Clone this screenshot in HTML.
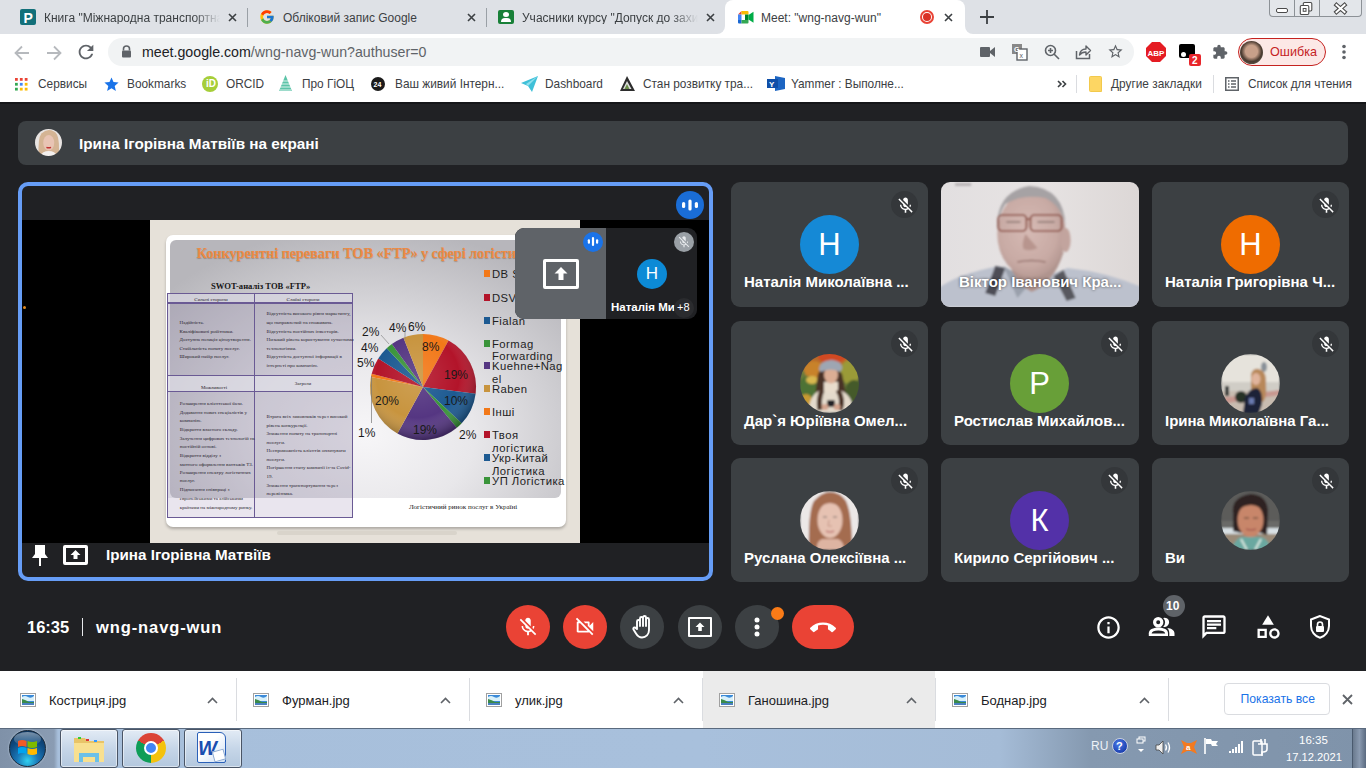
<!DOCTYPE html>
<html><head><meta charset="utf-8">
<style>
*{margin:0;padding:0;box-sizing:border-box}
html,body{width:1366px;height:768px;overflow:hidden;background:#202124;font-family:"Liberation Sans",sans-serif}
.a{position:absolute}
.t{position:absolute;white-space:nowrap;line-height:1}
svg{position:absolute;overflow:visible}
.tabt{font-size:12px;color:#3c4043;top:11.5px}
.fade{-webkit-mask-image:linear-gradient(to right,#000 85%,transparent)}
.sep{position:absolute;width:1px;background:#9aa0a6}
.bmt{font-size:11.85px;color:#3c4043;top:79px}
.nm{font-size:15px;font-weight:bold;color:#fff}
.tile{position:absolute;background:#3c4043;border-radius:9px;width:197px;height:125px}
.mute{position:absolute;width:27px;height:27px;border-radius:50%;background:#34373a}
.av{position:absolute;width:59px;height:59px;border-radius:50%;color:#fff;font-size:31px;text-align:center;line-height:59px}
.btn{position:absolute;width:44px;height:44px;border-radius:22px;top:605px;background:#3c4043}
.red{background:#ea4335}
.st{font:5px "Liberation Serif";color:#2a2530;line-height:6px}
.dl{font-size:13px;color:#202124;top:694px}
</style></head><body>
<!-- TAB STRIP -->
<div class="a" style="left:0;top:0;width:1366px;height:34px;background:#dee1e6"></div>
<div class="a" style="left:717px;top:26px;width:256px;height:8px;background:#fff"></div><div class="a" style="left:709px;top:18px;width:16px;height:16px;border-radius:50%;background:#dee1e6"></div><div class="a" style="left:965px;top:18px;width:16px;height:16px;border-radius:50%;background:#dee1e6"></div>
<!-- tab1 -->
<div class="a" style="left:20px;top:9px;width:16px;height:16px;background:#13707a;border-radius:2px"></div>
<div class="t" style="left:23.5px;top:9.5px;font:bold 14px 'Liberation Sans';color:#fff;line-height:16px">P</div>
<div class="t tabt fade" style="left:44px;width:176px;overflow:hidden">Книга "Міжнародна транспортна</div>
<svg style="left:228px;top:13px" width="9" height="9" viewBox="0 0 9 9"><path d="M1 1L8 8M8 1L1 8" stroke="#3c4043" stroke-width="1.6"/></svg>
<div class="sep" style="left:247px;top:8px;height:19px"></div>
<!-- tab2 -->
<svg style="left:259px;top:9px" width="16" height="16" viewBox="0 0 48 48"><path fill="#FFC107" d="M43.6 20H24v8h11.3C33.7 32.7 29.2 36 24 36c-6.6 0-12-5.4-12-12s5.4-12 12-12c3.1 0 5.8 1.2 7.9 3l5.7-5.7C34 6.1 29.3 4 24 4 12.9 4 4 12.9 4 24s8.9 20 20 20 20-8.9 20-20c0-1.3-.1-2.7-.4-4z"/><path fill="#FF3D00" d="M6.3 14.7l6.6 4.8C14.7 15.1 19 12 24 12c3.1 0 5.8 1.2 7.9 3l5.7-5.7C34 6.1 29.3 4 24 4 16.3 4 9.7 8.3 6.3 14.7z"/><path fill="#4CAF50" d="M24 44c5.2 0 9.9-2 13.4-5.2l-6.2-5.2C29.2 35.1 26.7 36 24 36c-5.2 0-9.6-3.3-11.3-8l-6.5 5C9.5 39.6 16.2 44 24 44z"/><path fill="#1976D2" d="M43.6 20H24v8h11.3c-.8 2.2-2.2 4.2-4.1 5.6l6.2 5.2C37 39.2 44 34 44 24c0-1.3-.1-2.7-.4-4z"/></svg>
<div class="t tabt" style="left:283px">Обліковий запис Google</div>
<svg style="left:467px;top:13px" width="9" height="9" viewBox="0 0 9 9"><path d="M1 1L8 8M8 1L1 8" stroke="#3c4043" stroke-width="1.6"/></svg>
<div class="sep" style="left:486px;top:8px;height:19px"></div>
<!-- tab3 -->
<div class="a" style="left:498px;top:10px;width:16px;height:14px;background:#188038;border-radius:2px"></div>
<div class="a" style="left:503px;top:12px;width:6px;height:5px;background:#fff;border-radius:50%"></div>
<div class="a" style="left:501px;top:18px;width:10px;height:4px;background:#fff;border-radius:4px 4px 0 0"></div>
<div class="t tabt fade" style="left:522px;width:176px;overflow:hidden">Учасники курсу "Допуск до захисту</div>
<svg style="left:706px;top:13px" width="9" height="9" viewBox="0 0 9 9"><path d="M1 1L8 8M8 1L1 8" stroke="#3c4043" stroke-width="1.6"/></svg>
<!-- active tab -->
<div class="a" style="left:725px;top:0;width:240px;height:34px;background:#fff;border-radius:8px 8px 0 0"></div>
<svg style="left:737.5px;top:10.5px" width="15.5" height="12.5" viewBox="0 0 15.5 12.5"><path d="M0 3.5L3.5 0V3.5Z" fill="#ea4335"/><path d="M3.5 0H9.5Q10.5 0 10.5 1V3.5H3.5Z" fill="#fbbc04"/><path d="M0 3.5H3.5V9H0Z" fill="#4285f4"/><path d="M0 9H3.5V12.5H1Q0 12.5 0 11.5Z" fill="#1967d2"/><path d="M3.5 9H10.5V11.5Q10.5 12.5 9.5 12.5H3.5Z" fill="#34a853"/><path d="M7 3.5H10.5V9H7Z" fill="#00832d"/><path d="M10.5 4L15.5 0.8V11.7L10.5 8.5Z" fill="#00ac47"/></svg>
<div class="t tabt" style="left:761px">Meet: "wng-navg-wun"</div>
<div class="a" style="left:920px;top:10px;width:14px;height:14px;border-radius:50%;border:2px solid #ea4335"></div>
<div class="a" style="left:923px;top:13px;width:8px;height:8px;border-radius:50%;background:#d93025"></div>
<svg style="left:944px;top:13px" width="9" height="9" viewBox="0 0 9 9"><path d="M1 1L8 8M8 1L1 8" stroke="#3c4043" stroke-width="1.6"/></svg>
<!-- new tab + -->
<svg style="left:980px;top:10px" width="14" height="14" viewBox="0 0 14 14"><path d="M7 0V14M0 7H14" stroke="#3c4043" stroke-width="1.8"/></svg>
<!-- window controls -->
<div class="a" style="left:1269px;top:-1px;width:93px;height:18px;border:1px solid #8c9196;border-top:none;border-radius:0 0 4px 4px;background:#e3e6ea"></div>
<div class="sep" style="left:1294px;top:0;height:17px;background:#8c9196"></div>
<div class="sep" style="left:1319px;top:0;height:17px;background:#8c9196"></div>
<div class="a" style="left:1276px;top:7.8px;width:12px;height:5px;border:1px solid #4a4a4a;border-radius:2px;background:#fff"></div>
<svg style="left:1299px;top:1px" width="15" height="15" viewBox="0 0 15 15"><rect x="4.3" y="1.5" width="8.5" height="8.5" rx="1.2" fill="#fff" stroke="#4a4a4a" stroke-width="1.1"/><rect x="1.3" y="4.5" width="8.5" height="9" rx="1.2" fill="#fff" stroke="#4a4a4a" stroke-width="1.1"/><rect x="4.2" y="7.5" width="2.8" height="2.8" fill="none" stroke="#4a4a4a" stroke-width="1"/></svg>
<svg style="left:1334px;top:2.5px" width="13" height="11" viewBox="0 0 13 11"><path d="M2.5 2L10.5 9M10.5 2L2.5 9" stroke="#4a4a4a" stroke-width="4.2" stroke-linecap="square"/><path d="M2.5 2L10.5 9M10.5 2L2.5 9" stroke="#fff" stroke-width="2" stroke-linecap="square"/></svg>

<!-- TOOLBAR -->
<div class="a" style="left:0;top:34px;width:1366px;height:34px;background:#fff"></div>
<svg style="left:14px;top:45px" width="16" height="16" viewBox="0 0 16 16"><path d="M15 8H2M8 1.5L1.5 8L8 14.5" fill="none" stroke="#b6b9bd" stroke-width="1.8"/></svg>
<svg style="left:46px;top:45px" width="16" height="16" viewBox="0 0 16 16"><path d="M1 8H14M8 1.5L14.5 8L8 14.5" fill="none" stroke="#b6b9bd" stroke-width="1.8"/></svg>
<svg style="left:75px;top:41px" width="22" height="22" viewBox="0 0 24 24"><path fill="#5f6368" d="M17.65 6.35C16.2 4.9 14.21 4 12 4c-4.42 0-7.99 3.58-7.99 8s3.57 8 7.99 8c3.73 0 6.84-2.55 7.73-6h-2.08c-.82 2.33-3.04 4-5.65 4-3.31 0-6-2.69-6-6s2.69-6 6-6c1.66 0 3.14.69 4.22 1.78L13 11h7V4l-2.35 2.35z"/></svg>
<div class="a" style="left:108px;top:38px;width:1026px;height:28px;background:#f1f3f4;border-radius:14px"></div>
<svg style="left:121px;top:45px" width="11" height="13" viewBox="0 0 11 13"><path d="M2.5 5.5V3.8C2.5 2 3.8 1 5.5 1S8.5 2 8.5 3.8V5.5" fill="none" stroke="#5f6368" stroke-width="1.6"/><rect x="1" y="5.5" width="9" height="7" rx="1" fill="#5f6368"/></svg>
<div class="t" style="left:142px;top:45px;font-size:14.2px;color:#202124">meet.google.com<span style="color:#5f6368">/wng-navg-wun?authuser=0</span></div>
<!-- omnibox icons -->
<svg style="left:980px;top:45px" width="16" height="14" viewBox="0 0 16 14"><rect x="0" y="2" width="10" height="10" rx="1" fill="#5f6368"/><path d="M10 6L15 2V12L10 8Z" fill="#5f6368"/></svg>
<svg style="left:1011px;top:43px" width="17" height="18" viewBox="0 0 17 18"><rect x="1" y="1" width="10" height="10" fill="#888"/><rect x="6" y="6" width="10" height="11" fill="#fff" stroke="#5f6368" stroke-width="1.4"/><text x="3" y="9" font-size="7" font-weight="bold" fill="#fff" font-family="Liberation Sans">G</text><text x="8.5" y="15" font-size="7" fill="#5f6368" font-family="Liberation Sans">x</text></svg>
<svg style="left:1044px;top:44px" width="16" height="16" viewBox="0 0 16 16"><circle cx="6.5" cy="6.5" r="5" fill="none" stroke="#5f6368" stroke-width="1.6"/><path d="M10 10L15 15M4 6.5H9M6.5 4V9" stroke="#5f6368" stroke-width="1.6"/></svg>
<svg style="left:1075px;top:44px" width="16" height="16" viewBox="0 0 16 16"><path d="M1.5 7V14.5H14.5V10" fill="none" stroke="#5f6368" stroke-width="1.5"/><path d="M4.5 11C5 7 8 5 11 5V2L15.5 6.5L11 11V8C8 8 6 9 4.5 11Z" fill="none" stroke="#5f6368" stroke-width="1.4" stroke-linejoin="round"/></svg>
<svg style="left:1107px;top:43px" width="17" height="17" viewBox="0 0 24 24"><path fill="#5f6368" d="M22 9.24l-7.19-.62L12 2 9.19 8.63 2 9.24l5.46 4.73L5.82 21 12 17.27 18.18 21l-1.63-7.03L22 9.24zM12 15.4l-3.76 2.27 1-4.28-3.32-2.88 4.38-.38L12 6.1l1.71 4.04 4.38.38-3.32 2.88 1 4.28L12 15.4z"/></svg>
<!-- extensions -->
<svg style="left:1146px;top:42px" width="20" height="20" viewBox="0 0 20 20"><path d="M6 0H14L20 6V14L14 20H6L0 14V6Z" fill="#e51c23"/><text x="10" y="13.5" font-size="8" font-weight="bold" fill="#fff" text-anchor="middle" font-family="Liberation Sans">ABP</text></svg>
<div class="a" style="left:1179px;top:44px;width:16px;height:14px;background:#000;border-radius:2px"></div>
<div class="a" style="left:1181px;top:52px;width:5px;height:5px;background:#fff;border-radius:50%"></div>
<div class="a" style="left:1189px;top:54px;width:12px;height:12px;background:#e8262b;border-radius:2px"></div>
<div class="t" style="left:1192px;top:55.5px;font-size:10px;font-weight:bold;color:#fff">2</div>
<svg style="left:1212px;top:44px" width="16" height="16" viewBox="0 0 24 24"><path fill="#5f6368" d="M20.5 11H19V7c0-1.1-.9-2-2-2h-4V3.5C13 2.12 11.88 1 10.5 1S8 2.12 8 3.5V5H4c-1.1 0-1.99.9-1.99 2v3.8H3.5c1.49 0 2.7 1.21 2.7 2.7s-1.21 2.7-2.7 2.7H2V20c0 1.1.9 2 2 2h3.8v-1.5c0-1.49 1.21-2.7 2.7-2.7 1.49 0 2.7 1.21 2.7 2.7V22H17c1.1 0 2-.9 2-2v-4h1.5c1.38 0 2.5-1.12 2.5-2.5S21.88 11 20.5 11z"/></svg>
<div class="a" style="left:1238px;top:38px;width:88px;height:28px;border:1px solid #c5221f;border-radius:14px;background:#fce8e6"></div>
<div class="a" style="left:1240px;top:41px;width:23px;height:23px;border-radius:50%;background:radial-gradient(circle at 50% 45%,#c8a08a 0 35%,#4a3a30 60%,#6b6f60 100%)"></div>
<div class="t" style="left:1270px;top:46px;font-size:12.6px;color:#c5221f">Ошибка</div>
<svg style="left:1341px;top:44px" width="6" height="16" viewBox="0 0 6 16"><circle cx="3" cy="2.5" r="1.8" fill="#5f6368"/><circle cx="3" cy="8" r="1.8" fill="#5f6368"/><circle cx="3" cy="13.5" r="1.8" fill="#5f6368"/></svg>

<!-- BOOKMARKS -->
<div class="a" style="left:0;top:68px;width:1366px;height:34px;background:#fff"></div>
<svg style="left:15px;top:77.5px" width="13" height="13" viewBox="0 0 14 14">
<rect x="0" y="0" width="3" height="3" fill="#ea4335"/><rect x="5.25" y="0" width="3" height="3" fill="#ea4335"/><rect x="10.5" y="0" width="3" height="3" fill="#ea4335"/>
<rect x="0" y="5.25" width="3" height="3" fill="#34a853"/><rect x="5.25" y="5.25" width="3" height="3" fill="#4285f4"/><rect x="10.5" y="5.25" width="3" height="3" fill="#fbbc04"/>
<rect x="0" y="10.5" width="3" height="3" fill="#34a853"/><rect x="5.25" y="10.5" width="3" height="3" fill="#fbbc04"/><rect x="10.5" y="10.5" width="3" height="3" fill="#fbbc04"/></svg>
<div class="t bmt" style="left:38px">Сервисы</div>
<svg style="left:102.5px;top:75.5px" width="17" height="17" viewBox="0 0 24 24"><path fill="#1a73e8" d="M12 17.27L18.18 21l-1.64-7.03L22 9.24l-7.19-.61L12 2 9.19 8.63 2 9.24l5.46 4.73L5.82 21z"/></svg>
<div class="t bmt" style="left:127px">Bookmarks</div>
<div class="a" style="left:202px;top:76px;width:16px;height:16px;border-radius:50%;background:#a6ce39"></div>
<div class="t" style="left:206px;top:79px;font-size:10px;font-weight:bold;color:#fff">iD</div>
<div class="t bmt" style="left:226px">ORCID</div>
<svg style="left:279px;top:75px" width="13" height="17" viewBox="0 0 13 17"><path d="M6.5 0L13 16H0Z" fill="#5cc4a8"/><path d="M2 9H11M1 12H12M3 6H10M0.5 15H12.5" stroke="#fff" stroke-width="0.8"/></svg>
<div class="t bmt" style="left:302px">Про ГіОЦ</div>
<div class="a" style="left:371px;top:77px;width:14px;height:14px;border-radius:50%;background:#1b1b1b"></div>
<div class="t" style="left:373.5px;top:81px;font-size:7px;font-weight:bold;color:#fff">24</div>
<div class="t bmt" style="left:395px">Ваш живий Інтерн...</div>
<svg style="left:521px;top:76px" width="17" height="16" viewBox="0 0 17 16"><path d="M0 7L17 0L11 16L7 10Z" fill="#3fc0d8"/><path d="M7 10L17 0L5 8Z" fill="#8fe0ee"/></svg>
<div class="t bmt" style="left:545px">Dashboard</div>
<svg style="left:619px;top:75px" width="17" height="17" viewBox="0 0 17 17"><path d="M8 1L16 16H1Z" fill="#2d2d2d"/><path d="M8 6L12.5 14H4Z" fill="#ddd"/><path d="M8 9L10.5 14H5.5Z" fill="#6b8f4a"/></svg>
<div class="t bmt" style="left:643px">Стан розвитку тра...</div>
<svg style="left:767px;top:75px" width="18" height="17" viewBox="0 0 18 17"><path d="M8 1L18 3V14L8 16Z" fill="#1c65c2"/><path d="M0 4H11V13H0Z" fill="#0f4fa8"/><text x="2" y="11.5" font-size="8" font-weight="bold" fill="#fff" font-family="Liberation Sans">Y</text></svg>
<div class="t bmt" style="left:791px">Yammer : Выполне...</div>
<svg style="left:1057px;top:80px" width="10" height="8" viewBox="0 0 10 8"><path d="M1 1L4 4L1 7M5.5 1L8.5 4L5.5 7" fill="none" stroke="#3c4043" stroke-width="1.6"/></svg>
<div class="sep" style="left:1076px;top:75px;height:18px;background:#dadce0"></div>
<svg style="left:1089px;top:76px" width="13" height="16" viewBox="0 0 13 16"><path d="M0.5 1.5Q0.5 0.5 1.5 0.5H11.5Q12.5 0.5 12.5 1.5V15.5H1.5Q0.5 15.5 0.5 14.5Z" fill="#fdd663" stroke="#f2c94c" stroke-width="1"/></svg>
<div class="t bmt" style="left:1111px">Другие закладки</div>
<div class="sep" style="left:1213px;top:75px;height:18px;background:#dadce0"></div>
<svg style="left:1225px;top:77px" width="14" height="14" viewBox="0 0 14 14"><rect x="0.75" y="0.75" width="12.5" height="12.5" fill="none" stroke="#5f6368" stroke-width="1.5"/><path d="M3 4H4.5M6 4H11M3 7H4.5M6 7H11M3 10H4.5M6 10H11" stroke="#5f6368" stroke-width="1.3"/></svg>
<div class="t bmt" style="left:1248px">Список для чтения</div>
<!-- MEET -->
<div class="a" style="left:0;top:102px;width:1366px;height:569px;background:#202124"></div>
<div class="a" style="left:0;top:102px;width:1366px;height:2px;background:#151619"></div>
<!-- header -->
<div class="a" style="left:18px;top:121px;width:1330px;height:44px;background:#3c4043;border-radius:8px"></div>
<svg style="left:35px;top:129px" width="27" height="27" viewBox="0 0 59 59"><defs><clipPath id="ch"><circle cx="29.5" cy="29.5" r="29.5"/></clipPath><filter id="fh"><feGaussianBlur stdDeviation="1.5"/></filter></defs><g clip-path="url(#ch)"><g filter="url(#fh)"><rect width="59" height="59" fill="#e8e4e2"/><path d="M8 59Q6 20 14 10Q22 2 30 2Q42 2 48 12Q54 24 52 59Z" fill="#d4b494"/><ellipse cx="30" cy="30" rx="12" ry="17" fill="#e8c4b4"/><path d="M25 40Q30 42 35 40" stroke="#c03030" stroke-width="3"/><path d="M12 59Q16 48 30 48Q44 48 48 59Z" fill="#f4f0ee"/></g></g></svg>
<div class="t nm" style="left:79px;top:135.5px;font-size:15.3px">Ірина Ігорівна Матвіїв на екрані</div>
<!-- main tile -->
<div class="a" style="left:18px;top:182px;width:695px;height:399px;border:4px solid #669df6;border-radius:10px;background:#202124"></div>
<div class="a" style="left:22px;top:220px;width:687px;height:323px;background:#000"></div><div class="a" style="left:23px;top:306px;width:3px;height:3px;border-radius:50%;background:#e08a20"></div>
<div class="a" style="left:676px;top:191px;width:28px;height:28px;border-radius:50%;background:#1a6dd6"></div>
<svg style="left:681px;top:197px" width="18" height="16" viewBox="0 0 18 16"><rect x="1" y="5" width="3.2" height="6" rx="1.6" fill="#fff"/><rect x="7.4" y="2.5" width="3.2" height="11" rx="1.6" fill="#fff"/><rect x="13.8" y="5" width="3.2" height="6" rx="1.6" fill="#fff"/></svg>
<div class="a" style="left:150px;top:220px;width:430px;height:323px;background:#e6e1d9"></div>
<div class="a" style="left:166px;top:235px;width:400px;height:292px;background:#fff;border-radius:7px;box-shadow:0 2px 3px rgba(0,0,0,.25)"></div>
<div class="a" style="left:277px;top:531px;width:180px;height:4px;border-radius:2px;background:#d9d4cb"></div>
<div class="a" style="left:170px;top:240px;width:390.5px;height:258px;border-radius:6px;background:radial-gradient(ellipse 70% 80% at 50% 75%,#f7f6f8 0,#e8e7ea 40%,#b7b6bb 100%)"></div>
<div class="t" style="left:196.5px;top:245.3px;font:bold 14.6px 'Liberation Serif';color:#ec8a44;letter-spacing:-.2px;text-shadow:0 1px 1px rgba(120,60,20,.35)">Конкурентні переваги ТОВ «FTP» у сфері логістики</div>
<div class="t" style="left:211px;top:280.7px;font:bold 8.6px 'Liberation Serif';color:#161616">SWOT-аналіз ТОВ «FTP»</div>
<div class="a" style="left:167px;top:293px;width:186px;height:225px;border:1px solid #6a5a94;background:rgba(150,140,170,.35)"></div>
<div class="a" style="left:168px;top:294px;width:184px;height:9px;background:rgba(230,230,236,.6)"></div>
<div class="a" style="left:168px;top:375px;width:184px;height:16px;background:rgba(230,230,236,.6)"></div>
<div class="a" style="left:168px;top:498px;width:184px;height:19px;background:rgba(235,232,240,.85)"></div>
<div class="a" style="left:167px;top:302px;width:186px;height:1.5px;background:#6a5a94"></div>
<div class="a" style="left:167px;top:375px;width:186px;height:1px;background:#6a5a94"></div>
<div class="a" style="left:167px;top:391px;width:186px;height:1px;background:#6a5a94"></div>
<div class="a" style="left:254px;top:293px;width:1px;height:225px;background:#6a5a94"></div>
<div class="t st" style="left:171px;width:80px;text-align:center;top:296.5px">Сильні сторони</div><div class="t st" style="left:263px;width:80px;text-align:center;top:296.5px">Слабкі сторони</div><div class="t st" style="left:174px;width:80px;text-align:center;top:385.0px">Можливості</div><div class="t st" style="left:263px;width:80px;text-align:center;top:381.4px">Загрози</div><div class="t st" style="left:179.6px;top:320.3px">Надійність.</div><div class="t st" style="left:179.6px;top:328.7px">Кваліфіковані робітники.</div><div class="t st" style="left:179.6px;top:337.4px">Доступна позиція ціноутворення.</div><div class="t st" style="left:179.6px;top:346.0px">Стабільність попиту послуг.</div><div class="t st" style="left:179.6px;top:354.0px">Широкий набір послуг.</div><div class="t st" style="left:266.6px;top:311.4px">Відсутність високого рівня маркетингу,</div><div class="t st" style="left:266.6px;top:319.8px">що направлений на споживача.</div><div class="t st" style="left:266.6px;top:328.5px">Відсутність постійних інвесторів.</div><div class="t st" style="left:266.6px;top:337.0px">Низький рівень користування сучасними</div><div class="t st" style="left:266.6px;top:345.5px">технологіями.</div><div class="t st" style="left:266.6px;top:354.0px">Відсутність доступної інформації в</div><div class="t st" style="left:266.6px;top:362.8px">інтернеті про компанію.</div><div class="t st" style="left:179.8px;top:400.9px">Розширення клієнтської бази.</div><div class="t st" style="left:179.8px;top:409.5px">Додавання нових спеціалістів у</div><div class="t st" style="left:179.8px;top:418.4px">компанію.</div><div class="t st" style="left:179.8px;top:427.0px">Відкриття власного складу.</div><div class="t st" style="left:179.8px;top:435.5px">Залучення цифрових технологій на</div><div class="t st" style="left:179.8px;top:444.0px">постійній основі.</div><div class="t st" style="left:179.8px;top:452.5px">Відкриття відділу з</div><div class="t st" style="left:179.8px;top:461.5px">митного оформлення вантажів ТЗ.</div><div class="t st" style="left:179.8px;top:469.6px">Розширення спектру логістичних</div><div class="t st" style="left:179.8px;top:478.0px">послуг.</div><div class="t st" style="left:179.8px;top:487.0px">Підписання співпраці з</div><div class="t st" style="left:179.8px;top:495.7px">європейськими та азійськими</div><div class="t st" style="left:179.8px;top:504.6px">країнами на міжнародному ринку.</div><div class="t st" style="left:266.6px;top:414.0px">Втрата всіх замовників через високий</div><div class="t st" style="left:266.6px;top:422.5px">рівень конкуренції.</div><div class="t st" style="left:266.6px;top:431.0px">Зниження попиту на транспортні</div><div class="t st" style="left:266.6px;top:439.6px">послуги.</div><div class="t st" style="left:266.6px;top:448.0px">Неспроможність клієнтів оплачувати</div><div class="t st" style="left:266.6px;top:456.7px">послуги.</div><div class="t st" style="left:266.6px;top:465.0px">Погіршення стану компанії із-за Covid-</div><div class="t st" style="left:266.6px;top:473.6px">19.</div><div class="t st" style="left:266.6px;top:482.5px">Зниження транспортування через</div><div class="t st" style="left:266.6px;top:491.0px">перевізника.</div>
<div class="t" style="left:409px;top:503px;font:7px 'Liberation Serif';color:#222">Логістичний ринок послуг в Україні</div>
<svg style="left:0;top:0" width="1366" height="768" viewBox="0 0 1366 768"><defs><radialGradient id="pg" cx="0.45" cy="0.4" r="0.6"><stop offset="0" stop-color="#fff" stop-opacity=".12"/><stop offset="0.65" stop-color="#fff" stop-opacity="0"/><stop offset="1" stop-color="#000" stop-opacity=".3"/></radialGradient></defs><path d="M423 387L423.00 334.00A53 53 0 0 1 448.53 340.56Z" fill="#f27818"/><path d="M423 387L448.53 340.56A53 53 0 0 1 475.58 393.64Z" fill="#b3142a"/><path d="M423 387L475.58 393.64A53 53 0 0 1 461.64 423.28Z" fill="#1d5a92"/><path d="M423 387L461.64 423.28A53 53 0 0 1 456.78 427.84Z" fill="#3a943a"/><path d="M423 387L456.78 427.84A53 53 0 0 1 397.47 433.44Z" fill="#553682"/><path d="M423 387L397.47 433.44A53 53 0 0 1 370.94 377.07Z" fill="#c8943e"/><path d="M423 387L370.94 377.07A53 53 0 0 1 371.67 373.82Z" fill="#f27818"/><path d="M423 387L371.67 373.82A53 53 0 0 1 378.25 358.60Z" fill="#b3142a"/><path d="M423 387L378.25 358.60A53 53 0 0 1 386.72 348.36Z" fill="#1d5a92"/><path d="M423 387L386.72 348.36A53 53 0 0 1 391.85 344.12Z" fill="#3a943a"/><path d="M423 387L391.85 344.12A53 53 0 0 1 403.49 337.72Z" fill="#553682"/><path d="M423 387L403.49 337.72A53 53 0 0 1 423.00 334.00Z" fill="#c8943e"/><circle cx="423" cy="387" r="53" fill="url(#pg)"/><path d="M371.5 376V423" stroke="#777" stroke-width=".7"/><path d="M381 335L389 344M405 331V340" stroke="#888" stroke-width=".7"/></svg>
<div class="t" style="left:362px;top:325.5px;font-size:12px;color:#1a1a1a">2%</div>
<div class="t" style="left:389px;top:321.5px;font-size:12px;color:#1a1a1a">4%</div>
<div class="t" style="left:408px;top:320.5px;font-size:12px;color:#1a1a1a">6%</div>
<div class="t" style="left:361px;top:341.5px;font-size:12px;color:#1a1a1a">4%</div>
<div class="t" style="left:357px;top:356.5px;font-size:12px;color:#1a1a1a">5%</div>
<div class="t" style="left:422px;top:340.5px;font-size:12px;color:#1a1a1a">8%</div>
<div class="t" style="left:444px;top:368.5px;font-size:12px;color:#1a1a1a">19%</div>
<div class="t" style="left:444px;top:394.5px;font-size:12px;color:#1a1a1a">10%</div>
<div class="t" style="left:375px;top:394.5px;font-size:12px;color:#1a1a1a">20%</div>
<div class="t" style="left:413px;top:423.5px;font-size:12px;color:#1a1a1a">19%</div>
<div class="t" style="left:358px;top:426.5px;font-size:12px;color:#1a1a1a">1%</div>
<div class="t" style="left:459px;top:428.5px;font-size:12px;color:#1a1a1a">2%</div>
<div class="a" style="left:484px;top:270px;width:6px;height:7px;background:#f27818"></div>
<div class="t" style="left:492px;top:268px;font-size:11.3px;line-height:12.5px;color:#1e1e1e;letter-spacing:.45px">DB Schenker</div>
<div class="a" style="left:484px;top:293.6px;width:6px;height:7px;background:#b3142a"></div>
<div class="t" style="left:492px;top:291.6px;font-size:11.3px;line-height:12.5px;color:#1e1e1e;letter-spacing:.45px">DSV</div>
<div class="a" style="left:484px;top:316.8px;width:6px;height:7px;background:#1d5a92"></div>
<div class="t" style="left:492px;top:314.8px;font-size:11.3px;line-height:12.5px;color:#1e1e1e;letter-spacing:.45px">Fialan</div>
<div class="a" style="left:484px;top:339.6px;width:6px;height:7px;background:#3a943a"></div>
<div class="t" style="left:492px;top:337.6px;font-size:11.3px;line-height:12.5px;color:#1e1e1e;letter-spacing:.45px">Formag<br>Forwarding</div>
<div class="a" style="left:484px;top:362.4px;width:6px;height:7px;background:#553682"></div>
<div class="t" style="left:492px;top:360.4px;font-size:11.3px;line-height:12.5px;color:#1e1e1e;letter-spacing:.45px">Kuehne+Nag<br>el</div>
<div class="a" style="left:484px;top:385px;width:6px;height:7px;background:#c8943e"></div>
<div class="t" style="left:492px;top:383px;font-size:11.3px;line-height:12.5px;color:#1e1e1e;letter-spacing:.45px">Raben</div>
<div class="a" style="left:484px;top:408px;width:6px;height:7px;background:#f27818"></div>
<div class="t" style="left:492px;top:406px;font-size:11.3px;line-height:12.5px;color:#1e1e1e;letter-spacing:.45px">Інші</div>
<div class="a" style="left:484px;top:431.3px;width:6px;height:7px;background:#b3142a"></div>
<div class="t" style="left:492px;top:429.3px;font-size:11.3px;line-height:12.5px;color:#1e1e1e;letter-spacing:.45px">Твоя<br>логістика</div>
<div class="a" style="left:484px;top:454.3px;width:6px;height:7px;background:#1d5a92"></div>
<div class="t" style="left:492px;top:452.3px;font-size:11.3px;line-height:12.5px;color:#1e1e1e;letter-spacing:.45px">Укр-Китай<br>Логістика</div>
<div class="a" style="left:484px;top:477.3px;width:6px;height:7px;background:#3a943a"></div>
<div class="t" style="left:492px;top:475.3px;font-size:11.3px;line-height:12.5px;color:#1e1e1e;letter-spacing:.45px">УП Логістика</div>
<div class="a" style="left:515px;top:228px;width:182px;height:91px;border-radius:9px;background:#202124;overflow:hidden"><div class="a" style="left:0;top:0;width:91px;height:91px;background:#5f6368"></div></div>
<div class="a" style="left:543px;top:259px;width:36px;height:30px;border:3px solid #fff;border-radius:2px"></div>
<svg style="left:553px;top:266px" width="16" height="16" viewBox="0 0 16 16"><path d="M8 1L14.5 7.5H10.5V14H5.5V7.5H1.5Z" fill="#fff"/></svg>
<div class="a" style="left:583px;top:231.5px;width:20px;height:20px;border-radius:50%;background:#1a73e8"></div>
<svg style="left:587px;top:236px" width="12" height="11" viewBox="0 0 12 11"><rect x=".8" y="3.2" width="2.2" height="4.6" rx="1.1" fill="#fff"/><rect x="4.9" y="1" width="2.2" height="9" rx="1.1" fill="#fff"/><rect x="9" y="3.2" width="2.2" height="4.6" rx="1.1" fill="#fff"/></svg>
<div class="a" style="left:674px;top:231.5px;width:20px;height:20px;border-radius:50%;background:#9aa0a6"></div>
<svg style="left:677px;top:234.5px" width="14" height="14" viewBox="0 0 24 24"><path fill="#e8eaed" d="M19 11h-1.7c0 .74-.16 1.43-.43 2.05l1.23 1.23c.56-.98.9-2.09.9-3.28zm-4.02.17c0-.06.02-.11.02-.17V5c0-1.66-1.34-3-3-3S9 3.34 9 5v.18l5.98 5.99zM4.27 3L3 4.27l6.01 6.01V11c0 1.66 1.33 3 2.99 3 .22 0 .44-.03.65-.08l1.66 1.66c-.71.33-1.5.52-2.31.52-2.76 0-5.3-2.1-5.3-5.1H5c0 3.41 2.72 6.23 6 6.72V21h2v-3.28c.91-.13 1.77-.45 2.54-.9L19.73 21 21 19.73 4.27 3z"/></svg>
<div class="a" style="left:637px;top:259px;width:30px;height:30px;border-radius:50%;background:#0c8ad6;color:#fff;font-size:17px;line-height:30px;text-align:center">H</div>
<div class="t" style="left:611px;top:301.5px;font-size:11.5px;font-weight:bold;color:#fff;width:69px;overflow:hidden">Наталія Миколаївна</div>
<div class="a" style="left:674px;top:297.5px;width:20px;height:20px;border-radius:50%;background:#2a2b2e"></div>
<div class="t" style="left:677px;top:302px;font-size:11px;color:#fff">+8</div>
<svg style="left:31px;top:544px" width="18" height="22" viewBox="0 0 18 22"><path d="M4 1H14V10L17 14H10V22H8V14H1L4 10Z" fill="#fff"/></svg>
<div class="a" style="left:63px;top:545px;width:25px;height:20px;border:3px solid #fff;border-radius:2px"></div>
<svg style="left:69px;top:549px" width="13" height="11" viewBox="0 0 13 11"><path d="M6.5 1L11.5 6H8.5V10H4.5V6H1.5Z" fill="#fff"/></svg>
<div class="t nm" style="left:106px;top:546.5px;font-size:15.2px">Ірина Ігорівна Матвіїв</div>
<div class="tile" style="left:731px;top:182px;height:125px"></div>
<div class="mute" style="left:891px;top:191px"></div>
<svg style="left:895.7px;top:195.5px" width="19" height="19" viewBox="0 0 24 24"><path fill="#fff" d="M19 11h-1.7c0 .74-.16 1.43-.43 2.05l1.23 1.23c.56-.98.9-2.09.9-3.28zm-4.02.17c0-.06.02-.11.02-.17V5c0-1.66-1.34-3-3-3S9 3.34 9 5v.18l5.98 5.99zM4.27 3L3 4.27l6.01 6.01V11c0 1.66 1.33 3 2.99 3 .22 0 .44-.03.65-.08l1.66 1.66c-.71.33-1.5.52-2.31.52-2.76 0-5.3-2.1-5.3-5.1H5c0 3.41 2.72 6.23 6 6.72V21h2v-3.28c.91-.13 1.77-.45 2.54-.9L19.73 21 21 19.73 4.27 3z"/></svg>
<div class="av" style="left:800px;top:215px;background:#1589d6">Н</div>
<div class="t nm" style="left:744px;top:274px">Наталія Миколаївна ...</div>
<svg style="left:941px;top:182px" width="198" height="125" viewBox="0 0 197 125" preserveAspectRatio="none"><defs><clipPath id="vc"><rect width="197" height="125" rx="9"/></clipPath><filter id="bl"><feGaussianBlur stdDeviation="1.2"/></filter><linearGradient id="vbg" x1="0" x2="1"><stop offset="0" stop-color="#e2dfe0"/><stop offset=".5" stop-color="#e7e3e3"/><stop offset="1" stop-color="#dcd7d6"/></linearGradient><radialGradient id="vf" cx=".45" cy=".45" r=".6"><stop offset="0" stop-color="#d6bab4"/><stop offset=".7" stop-color="#c8aaa4"/><stop offset="1" stop-color="#b39690"/></radialGradient></defs>
<g clip-path="url(#vc)"><rect width="197" height="125" fill="url(#vbg)"/>
<g filter="url(#bl)">
<rect x="14" y="1" width="16" height="3" fill="#b8b4b6"/>
<path d="M-5 125V108Q15 92 58 84L90 100L126 86Q165 90 202 106V125Z" fill="#bcc1cd"/>
<path d="M54 84L64 86L54 114L44 111Z" fill="#4e4e56"/>
<path d="M112 94L122 88L134 116L125 119Z" fill="#58585f"/>
<path d="M62 84L76 116L90 100Z" fill="#9aa0ac"/>
<path d="M64 66Q70 100 90 110Q112 102 122 70Z" fill="#b0948e"/>
<ellipse cx="90" cy="52" rx="34" ry="43" fill="url(#vf)"/>
<ellipse cx="124" cy="58" rx="5" ry="12" fill="#c2a49e"/>
<path d="M56 48Q54 10 88 4Q122 6 124 44Q120 24 104 16Q80 12 64 22Q57 32 56 48Z" fill="#a6a2a4"/>
<rect x="57" y="33" width="28" height="16" rx="4" fill="none" stroke="#8a4c40" stroke-width="1.7"/>
<rect x="89" y="33" width="31" height="16" rx="4" fill="none" stroke="#8a4c40" stroke-width="1.7"/>
<path d="M85 37H89" stroke="#8a4c40" stroke-width="1.6"/>
<path d="M65 40H79M96 40H113" stroke="#8a7570" stroke-width="1.6"/>
<path d="M84 52Q80 62 82 67Q88 70 96 66" fill="#b8958e"/>
<path d="M76 80Q90 77 104 80" stroke="#94726c" stroke-width="1.6" fill="none"/>
</g></g></svg>


<div class="t nm" style="left:959px;top:274px;text-shadow:0 0 3px rgba(0,0,0,.6)">Віктор Іванович Кра...</div>
<div class="tile" style="left:1152px;top:182px;height:125px"></div>
<div class="mute" style="left:1312px;top:191px"></div>
<svg style="left:1316.7px;top:195.5px" width="19" height="19" viewBox="0 0 24 24"><path fill="#fff" d="M19 11h-1.7c0 .74-.16 1.43-.43 2.05l1.23 1.23c.56-.98.9-2.09.9-3.28zm-4.02.17c0-.06.02-.11.02-.17V5c0-1.66-1.34-3-3-3S9 3.34 9 5v.18l5.98 5.99zM4.27 3L3 4.27l6.01 6.01V11c0 1.66 1.33 3 2.99 3 .22 0 .44-.03.65-.08l1.66 1.66c-.71.33-1.5.52-2.31.52-2.76 0-5.3-2.1-5.3-5.1H5c0 3.41 2.72 6.23 6 6.72V21h2v-3.28c.91-.13 1.77-.45 2.54-.9L19.73 21 21 19.73 4.27 3z"/></svg>
<div class="av" style="left:1221px;top:215px;background:#ef6c00">Н</div>
<div class="t nm" style="left:1165px;top:274px">Наталія Григорівна Ч...</div>
<div class="tile" style="left:731px;top:321px;height:124px"></div>
<div class="mute" style="left:891px;top:330px"></div>
<svg style="left:895.7px;top:334.5px" width="19" height="19" viewBox="0 0 24 24"><path fill="#fff" d="M19 11h-1.7c0 .74-.16 1.43-.43 2.05l1.23 1.23c.56-.98.9-2.09.9-3.28zm-4.02.17c0-.06.02-.11.02-.17V5c0-1.66-1.34-3-3-3S9 3.34 9 5v.18l5.98 5.99zM4.27 3L3 4.27l6.01 6.01V11c0 1.66 1.33 3 2.99 3 .22 0 .44-.03.65-.08l1.66 1.66c-.71.33-1.5.52-2.31.52-2.76 0-5.3-2.1-5.3-5.1H5c0 3.41 2.72 6.23 6 6.72V21h2v-3.28c.91-.13 1.77-.45 2.54-.9L19.73 21 21 19.73 4.27 3z"/></svg>
<div class="t nm" style="left:744px;top:413px">Дар`я Юріївна Омел...</div>
<div class="tile" style="left:941px;top:321px;height:124px;width:198px"></div>
<div class="mute" style="left:1101px;top:330px"></div>
<svg style="left:1105.7px;top:334.5px" width="19" height="19" viewBox="0 0 24 24"><path fill="#fff" d="M19 11h-1.7c0 .74-.16 1.43-.43 2.05l1.23 1.23c.56-.98.9-2.09.9-3.28zm-4.02.17c0-.06.02-.11.02-.17V5c0-1.66-1.34-3-3-3S9 3.34 9 5v.18l5.98 5.99zM4.27 3L3 4.27l6.01 6.01V11c0 1.66 1.33 3 2.99 3 .22 0 .44-.03.65-.08l1.66 1.66c-.71.33-1.5.52-2.31.52-2.76 0-5.3-2.1-5.3-5.1H5c0 3.41 2.72 6.23 6 6.72V21h2v-3.28c.91-.13 1.77-.45 2.54-.9L19.73 21 21 19.73 4.27 3z"/></svg>
<div class="av" style="left:1010px;top:354px;background:#689f38">Р</div>
<div class="t nm" style="left:954px;top:413px">Ростислав Михайлов...</div>
<div class="tile" style="left:1152px;top:321px;height:124px"></div>
<div class="mute" style="left:1312px;top:330px"></div>
<svg style="left:1316.7px;top:334.5px" width="19" height="19" viewBox="0 0 24 24"><path fill="#fff" d="M19 11h-1.7c0 .74-.16 1.43-.43 2.05l1.23 1.23c.56-.98.9-2.09.9-3.28zm-4.02.17c0-.06.02-.11.02-.17V5c0-1.66-1.34-3-3-3S9 3.34 9 5v.18l5.98 5.99zM4.27 3L3 4.27l6.01 6.01V11c0 1.66 1.33 3 2.99 3 .22 0 .44-.03.65-.08l1.66 1.66c-.71.33-1.5.52-2.31.52-2.76 0-5.3-2.1-5.3-5.1H5c0 3.41 2.72 6.23 6 6.72V21h2v-3.28c.91-.13 1.77-.45 2.54-.9L19.73 21 21 19.73 4.27 3z"/></svg>
<div class="t nm" style="left:1165px;top:413px">Ірина Миколаївна Га...</div>
<div class="tile" style="left:731px;top:458px;height:124px"></div>
<div class="mute" style="left:891px;top:467px"></div>
<svg style="left:895.7px;top:471.5px" width="19" height="19" viewBox="0 0 24 24"><path fill="#fff" d="M19 11h-1.7c0 .74-.16 1.43-.43 2.05l1.23 1.23c.56-.98.9-2.09.9-3.28zm-4.02.17c0-.06.02-.11.02-.17V5c0-1.66-1.34-3-3-3S9 3.34 9 5v.18l5.98 5.99zM4.27 3L3 4.27l6.01 6.01V11c0 1.66 1.33 3 2.99 3 .22 0 .44-.03.65-.08l1.66 1.66c-.71.33-1.5.52-2.31.52-2.76 0-5.3-2.1-5.3-5.1H5c0 3.41 2.72 6.23 6 6.72V21h2v-3.28c.91-.13 1.77-.45 2.54-.9L19.73 21 21 19.73 4.27 3z"/></svg>
<div class="t nm" style="left:744px;top:550px">Руслана Олексіївна ...</div>
<div class="tile" style="left:941px;top:458px;height:124px;width:198px"></div>
<div class="mute" style="left:1101px;top:467px"></div>
<svg style="left:1105.7px;top:471.5px" width="19" height="19" viewBox="0 0 24 24"><path fill="#fff" d="M19 11h-1.7c0 .74-.16 1.43-.43 2.05l1.23 1.23c.56-.98.9-2.09.9-3.28zm-4.02.17c0-.06.02-.11.02-.17V5c0-1.66-1.34-3-3-3S9 3.34 9 5v.18l5.98 5.99zM4.27 3L3 4.27l6.01 6.01V11c0 1.66 1.33 3 2.99 3 .22 0 .44-.03.65-.08l1.66 1.66c-.71.33-1.5.52-2.31.52-2.76 0-5.3-2.1-5.3-5.1H5c0 3.41 2.72 6.23 6 6.72V21h2v-3.28c.91-.13 1.77-.45 2.54-.9L19.73 21 21 19.73 4.27 3z"/></svg>
<div class="av" style="left:1010px;top:491px;background:#5331a8">К</div>
<div class="t nm" style="left:954px;top:550px">Кирило Сергійович ...</div>
<div class="tile" style="left:1152px;top:458px;height:124px"></div>
<div class="mute" style="left:1312px;top:467px"></div>
<svg style="left:1316.7px;top:471.5px" width="19" height="19" viewBox="0 0 24 24"><path fill="#fff" d="M19 11h-1.7c0 .74-.16 1.43-.43 2.05l1.23 1.23c.56-.98.9-2.09.9-3.28zm-4.02.17c0-.06.02-.11.02-.17V5c0-1.66-1.34-3-3-3S9 3.34 9 5v.18l5.98 5.99zM4.27 3L3 4.27l6.01 6.01V11c0 1.66 1.33 3 2.99 3 .22 0 .44-.03.65-.08l1.66 1.66c-.71.33-1.5.52-2.31.52-2.76 0-5.3-2.1-5.3-5.1H5c0 3.41 2.72 6.23 6 6.72V21h2v-3.28c.91-.13 1.77-.45 2.54-.9L19.73 21 21 19.73 4.27 3z"/></svg>
<div class="t nm" style="left:1165px;top:550px">Ви</div>
<svg style="left:800px;top:354px" width="59" height="59" viewBox="0 0 59 59"><defs><clipPath id="cd"><circle cx="29.5" cy="29.5" r="29.5"/></clipPath><filter id="fd" x="-10%" y="-10%" width="120%" height="120%"><feGaussianBlur stdDeviation=".9"/></filter></defs><g clip-path="url(#cd)"><g filter="url(#fd)"><rect width="59" height="59" fill="#6a7a3a"/>
<rect x="0" y="0" width="59" height="16" fill="#b86a2a"/>
<ellipse cx="32" cy="3" rx="14" ry="6" fill="#d04a20"/>
<ellipse cx="14" cy="16" rx="10" ry="9" fill="#c8822a"/>
<ellipse cx="50" cy="18" rx="10" ry="12" fill="#9a9a38"/>
<ellipse cx="8" cy="34" rx="9" ry="12" fill="#4e7234"/>
<ellipse cx="54" cy="38" rx="9" ry="12" fill="#445a2c"/>
<ellipse cx="12" cy="26" rx="6" ry="4" fill="#d8b850"/>
<ellipse cx="6" cy="46" rx="6" ry="6" fill="#c89a30"/>
<path d="M18 20Q15 36 16 50L24 54L36 54L46 50Q46 36 42 20Q36 12 30 12Q22 12 18 20Z" fill="#4a3226"/><path d="M24 28H38V40H24Z" fill="#e8dccc"/>
<path d="M8 59Q10 38 22 36L26 38H36L38 36Q52 38 54 59Z" fill="#e4dacc"/>
<path d="M22 36Q18 46 20 56M38 36Q44 46 40 56" stroke="#4a3226" stroke-width="5" fill="none"/>
<ellipse cx="31" cy="21" rx="7" ry="8.5" fill="#dcae94"/>
<path d="M19 16Q19 7 31 6Q43 7 42 15L40 18Q31 13 21 18Z" fill="#9ea6b2"/>
<rect x="27" y="46" width="8" height="7" rx="1.5" fill="#222226"/>
<ellipse cx="25" cy="53" rx="3.5" ry="3" fill="#d4a48e"/><ellipse cx="37" cy="53" rx="3.5" ry="3" fill="#d4a48e"/></g></g></svg><svg style="left:1221px;top:354px" width="59" height="59" viewBox="0 0 59 59"><defs><clipPath id="ci"><circle cx="29.5" cy="29.5" r="29.5"/></clipPath><filter id="fi" x="-10%" y="-10%" width="120%" height="120%"><feGaussianBlur stdDeviation=".9"/></filter></defs><g clip-path="url(#ci)"><g filter="url(#fi)"><rect width="59" height="59" fill="#e6e3dc"/>
<rect x="0" y="28" width="59" height="9" fill="#d0cdc6"/>
<rect x="0" y="37" width="59" height="22" fill="#c8bcb0"/>
<path d="M0 44L59 36V41L0 50Z" fill="#c89890"/>
<ellipse cx="43" cy="13" rx="3" ry="5" fill="#889098"/>
<ellipse cx="20" cy="43" rx="6" ry="6" fill="#283028"/>
<rect x="4" y="32" width="4" height="10" fill="#303838"/>
<path d="M30 20Q32 14 38 15Q46 17 45 30Q46 44 42 48L30 40Z" fill="#b8885a"/>
<ellipse cx="35" cy="25" rx="4.5" ry="6" fill="#e0b49c"/>
<path d="M22 59L24 44Q28 34 36 34Q42 36 41 50L38 59Z" fill="#1e2438"/>
<rect x="28" y="44" width="5" height="6" fill="#6a7ab0"/></g></g></svg><svg style="left:800px;top:491px" width="59" height="59" viewBox="0 0 59 59"><defs><clipPath id="cr"><circle cx="29.5" cy="29.5" r="29.5"/></clipPath><filter id="fr" x="-10%" y="-10%" width="120%" height="120%"><feGaussianBlur stdDeviation=".9"/></filter></defs><g clip-path="url(#cr)"><g filter="url(#fr)"><rect width="59" height="59" fill="#ece8e7"/>
<path d="M9 59Q8 20 14 10Q22 1 30 1Q40 1 46 10Q52 22 52 59Z" fill="#a46c50"/>
<path d="M17 59Q16 50 22 48H38Q44 50 44 59Z" fill="#ddb4a2"/>
<ellipse cx="30" cy="29" rx="12.5" ry="18" fill="#e6c2b2"/>
<path d="M18 18Q22 8 30 7Q38 8 42 18Q36 12 30 12Q24 12 18 18Z" fill="#a46c50"/>
<path d="M23 26H27M33 26H37" stroke="#7a6a6a" stroke-width="1.2"/>
<path d="M26 40Q30 42 34 40" stroke="#c07a78" stroke-width="1.6" fill="none"/>
<path d="M29 29L28 35H32" stroke="#c8988a" stroke-width="1" fill="none"/></g></g></svg><svg style="left:1221px;top:491px" width="59" height="59" viewBox="0 0 59 59"><defs><clipPath id="cv"><circle cx="29.5" cy="29.5" r="29.5"/></clipPath><filter id="fv" x="-10%" y="-10%" width="120%" height="120%"><feGaussianBlur stdDeviation=".9"/></filter></defs><g clip-path="url(#cv)"><g filter="url(#fv)"><rect width="59" height="59" fill="#6a6a68"/>
<rect x="0" y="0" width="59" height="30" fill="#5c5c5a"/>
<rect x="0" y="37" width="59" height="6" fill="#d8e0e4"/>
<rect x="0" y="43" width="59" height="16" fill="#9a8a78"/>
<path d="M12 22Q10 6 30 3Q46 4 47 20L46 44L40 42L20 42L12 40Z" fill="#2e2220"/>
<ellipse cx="29.5" cy="29" rx="13" ry="17" fill="#c8866a"/>
<path d="M17 20Q22 10 32 10Q42 12 44 22Q38 14 30 14Q22 14 17 20Z" fill="#2e2220"/>
<path d="M10 59Q14 48 20 46H40Q48 48 50 59Z" fill="#6aa8a0"/>
<path d="M20 48L26 59M34 59L40 48" stroke="#d8e8e0" stroke-width="2"/>
<path d="M23 27H28M32 27H37" stroke="#5a3a30" stroke-width="1.2"/>
<path d="M25 38Q30 40 35 38" stroke="#a85a50" stroke-width="1.4" fill="none"/></g></g></svg>
<div class="t" style="left:27px;top:619px;font-size:16.5px;font-weight:bold;color:#fff">16:35</div>
<div class="a" style="left:82px;top:618px;width:1px;height:18px;background:#e8eaed"></div>
<div class="t" style="left:96px;top:619px;font-size:16.5px;font-weight:bold;color:#fff;letter-spacing:.9px">wng-navg-wun</div>
<div class="btn red" style="left:506px"></div><svg style="left:517px;top:616px" width="22" height="22" viewBox="0 0 24 24"><path fill="#fff" d="M19 11h-1.7c0 .74-.16 1.43-.43 2.05l1.23 1.23c.56-.98.9-2.09.9-3.28zm-4.02.17c0-.06.02-.11.02-.17V5c0-1.66-1.34-3-3-3S9 3.34 9 5v.18l5.98 5.99zM4.27 3L3 4.27l6.01 6.01V11c0 1.66 1.33 3 2.99 3 .22 0 .44-.03.65-.08l1.66 1.66c-.71.33-1.5.52-2.31.52-2.76 0-5.3-2.1-5.3-5.1H5c0 3.41 2.72 6.23 6 6.72V21h2v-3.28c.91-.13 1.77-.45 2.54-.9L19.73 21 21 19.73 4.27 3z"/></svg>
<div class="btn red" style="left:563px"></div><svg style="left:574px;top:616px" width="22" height="22" viewBox="0 0 24 24"><path fill="#fff" d="M9.56 8l-2-2-4.15-4.14L2 3.27 4.73 6H4c-.55 0-1 .45-1 1v10c0 .55.45 1 1 1h12c.21 0 .39-.08.55-.18L19.73 21l1.41-1.41-8.86-8.86L9.56 8zM5 16V8h1.73l8 8H5zm10-8v2.61l6 6V6.5l-4 4V7c0-.55-.45-1-1-1h-5.61l2 2H15z"/></svg>
<div class="btn " style="left:620px"></div><svg style="left:631px;top:615px" width="22" height="24" viewBox="0 0 22 24"><path d="M6 13V6.5a1.5 1.5 0 0 1 3 0V11V3.5a1.5 1.5 0 0 1 3 0V11V2.5a1.5 1.5 0 0 1 3 0V11V4.5a1.5 1.5 0 0 1 3 0V15c0 4.5-3 7.5-7 7.5-3 0-4.5-1.5-6-4L2.5 14.5c-.6-1 0-2 1-2s1.7 .8 2.5 1.5Z" fill="none" stroke="#fff" stroke-width="1.9" stroke-linejoin="round"/></svg>
<div class="btn " style="left:678px"></div><div class="a" style="left:688px;top:617px;width:24px;height:20px;border:2.5px solid #fff;border-radius:1px"></div><svg style="left:694px;top:621px" width="12" height="12" viewBox="0 0 12 12"><path d="M6 1.5L10.5 6H7.8V10H4.2V6H1.5Z" fill="#fff"/></svg>
<div class="btn " style="left:735px"></div><svg style="left:752px;top:616px" width="10" height="22" viewBox="0 0 10 22"><circle cx="5" cy="4" r="2.5" fill="#fff"/><circle cx="5" cy="11" r="2.5" fill="#fff"/><circle cx="5" cy="18" r="2.5" fill="#fff"/></svg>
<div class="a" style="left:771px;top:607px;width:13px;height:13px;border-radius:50%;background:#fa7b17"></div>
<div class="a" style="left:792px;top:605px;width:62px;height:44px;border-radius:22px;background:#ea4335"></div>
<svg style="left:810px;top:615px" width="26" height="26" viewBox="0 0 24 24"><path fill="#fff" d="M12 9c-1.6 0-3.15.25-4.6.72v3.1c0 .39-.23.74-.56.9-.98.49-1.87 1.12-2.66 1.85-.18.18-.43.28-.7.28-.28 0-.53-.11-.71-.29L.29 13.08c-.18-.17-.29-.42-.29-.7 0-.28.11-.53.29-.71C3.34 8.78 7.46 7 12 7s8.66 1.78 11.71 4.67c.18.18.29.43.29.71 0 .28-.11.53-.29.71l-2.48 2.48c-.18.18-.43.29-.71.29-.27 0-.52-.11-.7-.28-.79-.74-1.69-1.36-2.67-1.85-.33-.16-.56-.5-.56-.9v-3.1C15.15 9.25 13.6 9 12 9z"/></svg>
<svg style="left:1095px;top:613.5px" width="27" height="27" viewBox="0 0 24 24"><path fill="#fff" d="M11 7h2v2h-2zm0 4h2v6h-2zm1-9C6.48 2 2 6.48 2 12s4.48 10 10 10 10-4.48 10-10S17.52 2 12 2zm0 18c-4.41 0-8-3.59-8-8s3.59-8 8-8 8 3.59 8 8-3.59 8-8 8z"/></svg>
<svg style="left:1146px;top:615px" width="30" height="24" viewBox="0 0 30 24"><circle cx="12.2" cy="7.3" r="3.6" fill="none" stroke="#fff" stroke-width="3.2"/><path d="M17.2 2.9A4.6 4.6 0 1 1 17.2 11.7A6 6 0 0 0 17.2 2.9Z" fill="#fff"/><path d="M2.8 21V18.2C2.8 14.8 7 12.6 12.4 12.6S22 14.8 22 18.2V21Z" fill="#fff"/><path d="M5.6 18.6Q6 15.6 12.4 15.6Q18.8 15.6 19.2 18.6Z" fill="#202124"/><path d="M21.2 13.1C25.6 13.6 28.5 15.4 28.5 18.4V21H23.3V18.2C23.3 16.2 22.6 14.5 21.2 13.1Z" fill="#fff"/></svg>
<div class="a" style="left:1163px;top:595px;width:22px;height:22px;border-radius:50%;background:#5f6368"></div>
<div class="t" style="left:1166px;top:600px;font-size:12px;font-weight:bold;color:#fff">10</div>
<svg style="left:1200px;top:613px" width="28" height="28" viewBox="0 0 24 24"><path fill="#fff" d="M20 2H4c-1.1 0-2 .9-2 2v18l4-4h14c1.1 0 2-.9 2-2V4c0-1.1-.9-2-2-2zm0 14H5.17L4 17.17V4h16v12zM6 12h8v2H6zm0-3h12v2H6zm0-3h12v2H6z"/></svg>
<svg style="left:1254px;top:613px" width="28" height="28" viewBox="0 0 24 24"><path fill="#fff" d="M12 2l-5 8h10z"/><path fill="#fff" d="M17.5 13c-2.49 0-4.5 2.01-4.5 4.5s2.01 4.5 4.5 4.5 4.5-2.01 4.5-4.5-2.01-4.5-4.5-4.5zm0 7c-1.38 0-2.5-1.12-2.5-2.5s1.12-2.5 2.5-2.5 2.5 1.12 2.5 2.5-1.12 2.5-2.5 2.5zM3 21.5h8v-8H3v8zm2-6h4v4H5v-4z"/></svg>
<svg style="left:1308px;top:614px" width="24" height="26" viewBox="0 0 24 26"><path d="M12 2L3 5.5V12c0 5.5 3.8 10.3 9 11.8 5.2-1.5 9-6.3 9-11.8V5.5Z" fill="none" stroke="#fff" stroke-width="2"/><path d="M9.5 12V10.5a2.5 2.5 0 0 1 5 0V12" fill="none" stroke="#fff" stroke-width="1.6"/><rect x="8" y="12" width="8" height="6" rx="1" fill="#fff"/></svg>
<div class="a" style="left:0;top:671px;width:1366px;height:57px;background:#fff"></div>
<div class="a" style="left:703px;top:671px;width:232px;height:57px;background:#ebebeb"></div>
<svg style="left:20px;top:693px" width="16" height="14" viewBox="0 0 16 14"><rect x=".5" y=".5" width="15" height="13" fill="#fff" stroke="#a0a0a0"/><rect x="2" y="2" width="12" height="10" fill="#3a8ad8"/><path d="M2 4Q5 2 8 4T14 3V8H2Z" fill="#d8f0fa"/><path d="M2 6Q6 7 9 9L14 9V10H2Z" fill="#3a8a4a"/><rect x="2" y="10" width="12" height="2" fill="#4a80c0"/></svg>
<div class="t dl" style="left:49px">Костриця.jpg</div>
<svg style="left:207px;top:697px" width="11" height="7" viewBox="0 0 11 7"><path d="M1 6L5.5 1.5L10 6" fill="none" stroke="#5f6368" stroke-width="1.6"/></svg>
<svg style="left:253px;top:693px" width="16" height="14" viewBox="0 0 16 14"><rect x=".5" y=".5" width="15" height="13" fill="#fff" stroke="#a0a0a0"/><rect x="2" y="2" width="12" height="10" fill="#3a8ad8"/><path d="M2 4Q5 2 8 4T14 3V8H2Z" fill="#d8f0fa"/><path d="M2 6Q6 7 9 9L14 9V10H2Z" fill="#3a8a4a"/><rect x="2" y="10" width="12" height="2" fill="#4a80c0"/></svg>
<div class="t dl" style="left:282px">Фурман.jpg</div>
<svg style="left:440px;top:697px" width="11" height="7" viewBox="0 0 11 7"><path d="M1 6L5.5 1.5L10 6" fill="none" stroke="#5f6368" stroke-width="1.6"/></svg>
<svg style="left:486px;top:693px" width="16" height="14" viewBox="0 0 16 14"><rect x=".5" y=".5" width="15" height="13" fill="#fff" stroke="#a0a0a0"/><rect x="2" y="2" width="12" height="10" fill="#3a8ad8"/><path d="M2 4Q5 2 8 4T14 3V8H2Z" fill="#d8f0fa"/><path d="M2 6Q6 7 9 9L14 9V10H2Z" fill="#3a8a4a"/><rect x="2" y="10" width="12" height="2" fill="#4a80c0"/></svg>
<div class="t dl" style="left:515px">улик.jpg</div>
<svg style="left:673px;top:697px" width="11" height="7" viewBox="0 0 11 7"><path d="M1 6L5.5 1.5L10 6" fill="none" stroke="#5f6368" stroke-width="1.6"/></svg>
<svg style="left:719px;top:693px" width="16" height="14" viewBox="0 0 16 14"><rect x=".5" y=".5" width="15" height="13" fill="#fff" stroke="#a0a0a0"/><rect x="2" y="2" width="12" height="10" fill="#3a8ad8"/><path d="M2 4Q5 2 8 4T14 3V8H2Z" fill="#d8f0fa"/><path d="M2 6Q6 7 9 9L14 9V10H2Z" fill="#3a8a4a"/><rect x="2" y="10" width="12" height="2" fill="#4a80c0"/></svg>
<div class="t dl" style="left:748px">Ганошина.jpg</div>
<svg style="left:906px;top:697px" width="11" height="7" viewBox="0 0 11 7"><path d="M1 6L5.5 1.5L10 6" fill="none" stroke="#5f6368" stroke-width="1.6"/></svg>
<svg style="left:952px;top:693px" width="16" height="14" viewBox="0 0 16 14"><rect x=".5" y=".5" width="15" height="13" fill="#fff" stroke="#a0a0a0"/><rect x="2" y="2" width="12" height="10" fill="#3a8ad8"/><path d="M2 4Q5 2 8 4T14 3V8H2Z" fill="#d8f0fa"/><path d="M2 6Q6 7 9 9L14 9V10H2Z" fill="#3a8a4a"/><rect x="2" y="10" width="12" height="2" fill="#4a80c0"/></svg>
<div class="t dl" style="left:981px">Боднар.jpg</div>
<svg style="left:1139px;top:697px" width="11" height="7" viewBox="0 0 11 7"><path d="M1 6L5.5 1.5L10 6" fill="none" stroke="#5f6368" stroke-width="1.6"/></svg>
<div class="a" style="left:236px;top:678px;width:1px;height:43px;background:#dadce0"></div>
<div class="a" style="left:469px;top:678px;width:1px;height:43px;background:#dadce0"></div>
<div class="a" style="left:702px;top:678px;width:1px;height:43px;background:#dadce0"></div>
<div class="a" style="left:935px;top:678px;width:1px;height:43px;background:#dadce0"></div>
<div class="a" style="left:1168px;top:678px;width:1px;height:43px;background:#dadce0"></div>
<div class="a" style="left:1224px;top:683px;width:106px;height:32px;border:1px solid #dadce0;border-radius:4px;background:#fff"></div>
<div class="t" style="left:1240.5px;top:693px;font-size:12.2px;color:#1a73e8">Показать все</div>
<svg style="left:1342px;top:694px" width="11" height="11" viewBox="0 0 11 11"><path d="M1 1L10 10M10 1L1 10" stroke="#5f6368" stroke-width="1.8"/></svg>
<div class="a" style="left:0;top:728px;width:1366px;height:40px;background:linear-gradient(to right,#7f91a8 0,#8a9cb3 54px,#a7bfdb 58px,#a8c0dc 700px,#a5bcd7 1000px,#8599b0 1090px,#7f93aa 1366px)"></div>
<div class="a" style="left:0;top:728px;width:1366px;height:1px;background:#5a6a7e"></div>
<div class="a" style="left:9px;top:730px;width:37px;height:37px;border-radius:50%;background:radial-gradient(circle at 50% 85%,#30d0f0 0,#1a78b8 30%,#0e4a80 60%,#0a2a50 100%);border:1.5px solid #1a2a3a;box-shadow:0 0 2px #cde"></div><div class="a" style="left:14px;top:732px;width:27px;height:14px;border-radius:50%;background:linear-gradient(rgba(255,255,255,.45),rgba(255,255,255,.05))"></div>
<svg style="left:17px;top:738px" width="21" height="20" viewBox="0 0 21 20"><path d="M1 3Q5 1 9.5 3V9Q5 7 1 9Z" fill="#f05a28"/><path d="M10.5 3Q15 5 20 3V9Q15 11 10.5 9Z" fill="#7fba00"/><path d="M1 10Q5 8 9.5 10V16Q5 14 1 16Z" fill="#00a4ef"/><path d="M10.5 10Q15 12 20 10V16Q15 18 10.5 16Z" fill="#ffb900"/></svg>
<div class="a" style="left:60px;top:729px;width:58px;height:39px;border:1px solid #4a5566;border-radius:3px;background:linear-gradient(#e2ebf5,#c6d6e8 50%,#b4c8de);box-shadow:inset 0 0 0 1px rgba(255,255,255,.5)"></div>
<div class="a" style="left:122px;top:729px;width:58px;height:39px;border:1px solid #4a5566;border-radius:3px;background:linear-gradient(#e2ebf5,#c6d6e8 50%,#b4c8de);box-shadow:inset 0 0 0 1px rgba(255,255,255,.5)"></div>
<div class="a" style="left:184px;top:729px;width:58px;height:39px;border:1px solid #4a5566;border-radius:3px;background:linear-gradient(#e2ebf5,#c6d6e8 50%,#b4c8de);box-shadow:inset 0 0 0 1px rgba(255,255,255,.5)"></div>
<svg style="left:73px;top:734px" width="32" height="30" viewBox="0 0 32 30"><path d="M1 4H12L14 7H31V28H1Z" fill="#e8c468"/><path d="M1 9H31V28H1Z" fill="#f8e090"/><rect x="5" y="3" width="3" height="2" fill="#3c3"/><rect x="13" y="5" width="3" height="2" fill="#d33"/><rect x="21" y="6" width="3" height="2" fill="#39f"/><path d="M6 28V19H26V28H22V23H10V28Z" fill="#6cc0e8"/></svg>
<div class="a" style="left:136px;top:733px;width:30px;height:30px;border-radius:50%;background:conic-gradient(from -60deg,#db4437 0 120deg,#f4c20d 120deg 240deg,#0f9d58 240deg 360deg)"></div>
<div class="a" style="left:144px;top:741px;width:14px;height:14px;border-radius:50%;background:#4285f4;border:2px solid #fff"></div>
<div class="a" style="left:197px;top:732px;width:29px;height:31px;background:linear-gradient(135deg,#fff 40%,#cfe0f4);border:1.5px solid #2a60b8;border-radius:2px 6px 2px 2px"></div>
<div class="t" style="left:198px;top:737px;font:bold 20px 'Liberation Sans';color:#1a4eb0;font-style:italic;letter-spacing:-1px">W</div><div class="a" style="left:213px;top:750px;width:12px;height:11px;background:#fff;border:1px solid #8aa8d0;transform:rotate(-15deg)"></div>
<div class="t" style="left:1091px;top:740px;font-size:12px;color:#eef2f8">RU</div>
<div class="a" style="left:1112px;top:738px;width:16px;height:16px;border-radius:50%;background:radial-gradient(circle at 40% 35%,#4a7ae8,#0a2a9a);border:1.5px solid #c8d0e0"></div>
<div class="t" style="left:1116px;top:741px;font-size:11px;font-weight:bold;color:#fff">?</div>
<svg style="left:1136px;top:736px" width="10" height="18" viewBox="0 0 10 18"><rect x="3" y="1" width="6" height="4" fill="none" stroke="#fff" stroke-width="1"/><rect x="1" y="3" width="6" height="4" fill="#7f93aa" stroke="#fff" stroke-width="1"/><path d="M2 13H8L5 16Z" fill="#fff"/></svg>
<svg style="left:1155px;top:739px" width="17" height="17" viewBox="0 0 17 17"><path d="M1 6H4L8 2V15L4 11H1Z" fill="#eee" stroke="#444" stroke-width=".8"/><path d="M10.5 5.5Q12.5 8.5 10.5 11.5M13 3.5Q16 8.5 13 13.5" fill="none" stroke="#fff" stroke-width="1.3"/></svg>
<svg style="left:1179px;top:738px" width="20" height="18" viewBox="0 0 20 18"><path d="M2 2L8 5H12L18 2L15 9L18 16L12 13H8L2 16L5 9Z" fill="#f47a20"/><text x="7" y="12" font-size="8" font-weight="bold" fill="#fff" font-family="Liberation Sans">a</text></svg>
<svg style="left:1203px;top:737px" width="16" height="18" viewBox="0 0 16 18"><path d="M2 1V17" stroke="#fff" stroke-width="1.6"/><path d="M3 2H8L9 4H15L13 7L15 9H9L8 7H3Z" fill="#fff"/></svg>
<svg style="left:1228px;top:740px" width="16" height="14" viewBox="0 0 16 14"><rect x="1" y="11" width="2" height="2" fill="#fff"/><rect x="4" y="9" width="2" height="4" fill="#fff"/><rect x="7" y="7" width="2" height="6" fill="#fff"/><rect x="10" y="4" width="2" height="9" fill="#fff"/><rect x="13" y="1" width="2" height="12" fill="#fff"/></svg>
<svg style="left:1252px;top:737px" width="16" height="20" viewBox="0 0 16 20"><rect x="1" y="4" width="9" height="14" rx="1" fill="none" stroke="#fff" stroke-width="1.5"/><path d="M6 7H15V12Q15 15 11 15H10V19M9 2V7M13 2V7" fill="none" stroke="#fff" stroke-width="1.6"/></svg>
<div class="t" style="left:1299px;top:735px;font-size:11.5px;color:#fff">16:35</div>
<div class="t" style="left:1286px;top:752px;font-size:11.2px;color:#fff">17.12.2021</div>
<div class="a" style="left:1352px;top:729px;width:14px;height:39px;background:linear-gradient(to right,#6a7a8e,#8a9ab0 50%,#5a6a80);border-left:1px solid #4a5a6e"></div>
</body></html>
